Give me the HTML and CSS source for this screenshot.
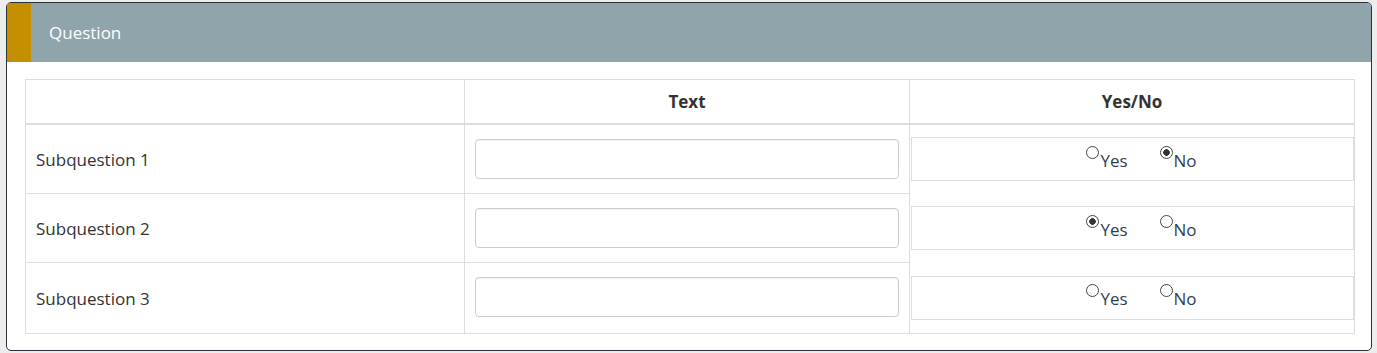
FILE: index.html
```html
<!DOCTYPE html>
<html>
<head>
  <title>Question</title>
  <link rel="stylesheet" href="styles.css">
</head>
<body>
<div class="panel">
  <div class="panel-heading">
    <span class="marker"></span>
    <span class="panel-title">Question</span>
  </div>
  <div class="panel-body">
    <table class="grid">
      <colgroup>
        <col class="col-label">
        <col class="col-text">
        <col class="col-yn">
      </colgroup>
      <thead>
        <tr>
          <th></th>
          <th>Text</th>
          <th>Yes/No</th>
        </tr>
      </thead>
      <tbody>
        <tr>
          <td class="label">Subquestion 1</td>
          <td class="text"><input type="text"></td>
          <td class="yn">
            <div class="yn-box">
              <label class="opt"><input type="radio" name="q1">Yes</label>
              <label class="opt"><input type="radio" name="q1" checked>No</label>
            </div>
          </td>
        </tr>
        <tr>
          <td class="label">Subquestion 2</td>
          <td class="text"><input type="text"></td>
          <td class="yn">
            <div class="yn-box">
              <label class="opt"><input type="radio" name="q2" checked>Yes</label>
              <label class="opt"><input type="radio" name="q2">No</label>
            </div>
          </td>
        </tr>
        <tr class="last">
          <td class="label">Subquestion 3</td>
          <td class="text"><input type="text"></td>
          <td class="yn">
            <div class="yn-box">
              <label class="opt"><input type="radio" name="q3">Yes</label>
              <label class="opt"><input type="radio" name="q3">No</label>
            </div>
          </td>
        </tr>
      </tbody>
    </table>
  </div>
</div>
</body>
</html>
```

FILE: styles.css
```css
body {
  margin: 0;
  padding: 2px 5px 0 6px;
  background-color: #ededed;
  font-family: "Open Sans", "DejaVu Sans", sans-serif;
  font-size: 17px;
  color: #333;
}

.panel {
  background-color: #fff;
  border: 1px solid #2a3138;
  border-radius: 5px;
  overflow: hidden;
}

.panel-heading {
  display: flex;
  align-items: center;
  height: 59px;
  background-color: #8fa4ab;
}

.marker {
  align-self: stretch;
  width: 24px;
  background-color: #c48f00;
}

.panel-title {
  color: #fff;
  margin-left: 18px;
  margin-top: -1px;
}

.panel-body {
  padding: 17px 16px 16px 18px;
}

.grid {
  width: 100%;
  border-collapse: collapse;
  border: 1px solid #ddd;
  table-layout: fixed;
}

.col-label { width: 439px; }
.col-text { width: 445px; }

.grid th {
  height: 43px;
  padding: 0 10px;
  border: 1px solid #ddd;
  border-bottom: 2px solid #ddd;
  font-weight: bold;
  text-align: center;
  color: #333;
}

.grid td {
  border: 1px solid #ddd;
  vertical-align: middle;
}

.grid td.label {
  padding: 0 10px;
}

.grid td.text {
  padding: 14px 10px;
}

.grid tr.last td.text {
  padding-bottom: 16px;
}

.grid td.text input {
  display: block;
  width: 100%;
  height: 40px;
  box-sizing: border-box;
  border: 1px solid #ccc;
  border-radius: 4px;
  box-shadow: inset 0 1px 1px rgba(0, 0, 0, 0.05);
  margin: 0;
}

.grid td.yn {
  border-top: none;
  border-bottom: none;
  padding: 0 0 0 1px;
}

.yn-box {
  display: flex;
  justify-content: center;
  align-items: center;
  gap: 32px;
  height: 44px;
  box-sizing: border-box;
  border: 1px solid #ddd;
  padding-left: 18px;
  padding-top: 2px;
  color: #2f3f4f;
}

.opt {
  display: inline-flex;
  align-items: flex-start;
}

.opt input {
  appearance: none;
  -webkit-appearance: none;
  width: 13px;
  height: 13px;
  margin: -3px 1px 0 0;
  border: 1px solid #444;
  border-radius: 50%;
  background: #fff;
  box-sizing: border-box;
}

.opt input:checked {
  background: radial-gradient(circle, #333 0, #333 3px, #fff 3.5px);
}
```
